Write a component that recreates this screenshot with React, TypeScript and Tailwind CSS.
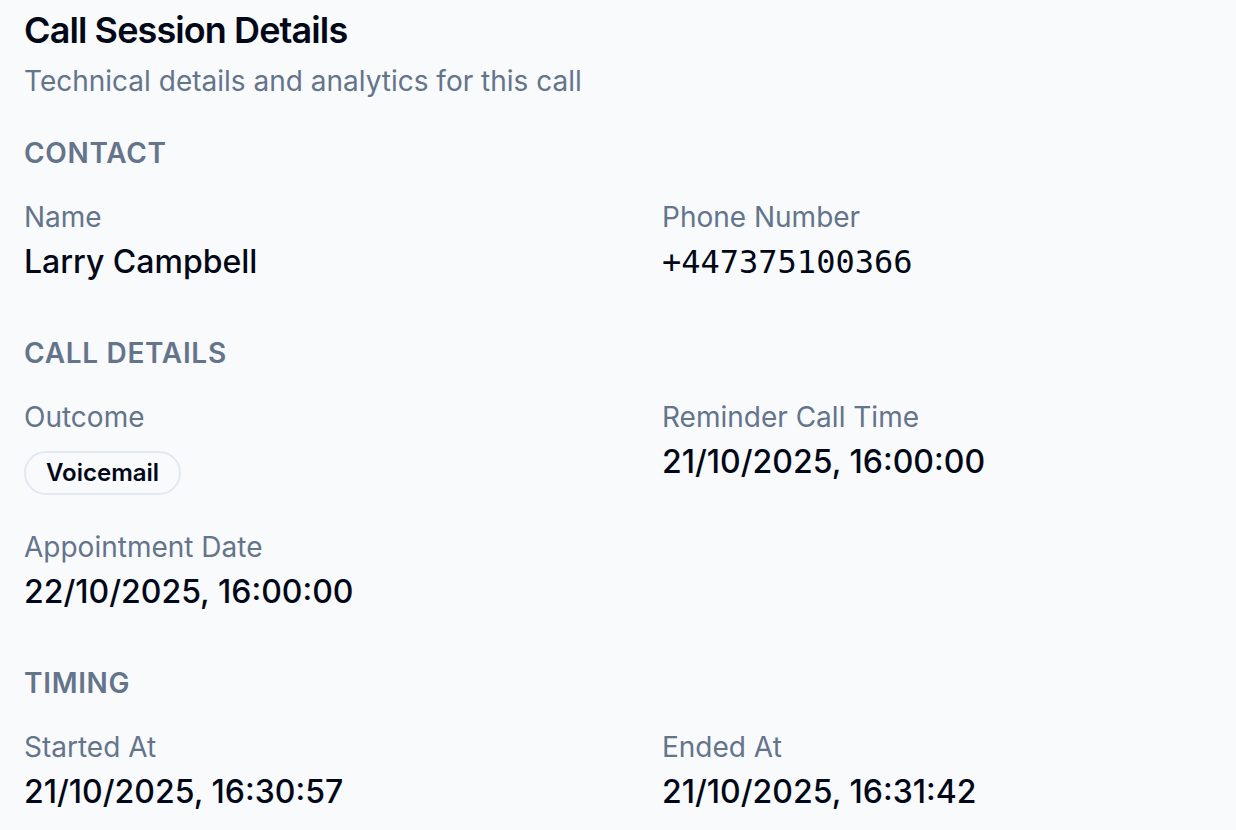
import React from "react";

const Label = ({ children }: { children: React.ReactNode }) => (
  <div className="text-[28px] leading-[40px] text-[#64748b]">{children}</div>
);

const Value = ({ children, mono }: { children: React.ReactNode; mono?: boolean }) => (
  <div
    className={
      mono
        ? "mt-[1px] text-[32px] leading-[48px] text-[#020817] [font-family:'DejaVu_Sans_Mono',monospace]"
        : "mt-[1px] text-[32px] leading-[48px] font-medium text-[#020817]"
    }
  >
    {children}
  </div>
);

const Heading = ({ children }: { children: React.ReactNode }) => (
  <div className="mb-[24px] text-[28px] leading-[40px] font-semibold uppercase tracking-[0.025em] text-[#64748b]">
    {children}
  </div>
);

export default function App() {
  return (
    <div className="min-h-[830px] w-full bg-[#f8fafc] px-[24px] pt-[12px] [font-family:Inter,'Noto_Sans',sans-serif]">
      <div className="flex flex-col gap-[13px]">
        <h1 className="text-[36px] leading-[36px] font-semibold tracking-tight text-[#020817]">
          Call Session Details
        </h1>
        <p className="text-[28px] leading-[40px] text-[#64748b]">
          Technical details and analytics for this call
        </p>
      </div>

      <div className="mt-[32px] flex flex-col gap-[47px]">
        <section>
          <Heading>Contact</Heading>
          <div className="grid grid-cols-[638px_1fr] gap-y-[32px]">
            <div>
              <Label>Name</Label>
              <Value>Larry Campbell</Value>
            </div>
            <div>
              <Label>Phone Number</Label>
              <Value mono>+447375100366</Value>
            </div>
          </div>
        </section>

        <section>
          <Heading>Call Details</Heading>
          <div className="grid grid-cols-[638px_1fr] gap-y-[32px]">
            <div>
              <Label>Outcome</Label>
              <div className="mt-[14px] flex">
                <span className="inline-flex h-[44px] items-center rounded-full border-2 border-[#e2e8f0] px-[20px] text-[24px] leading-[32px] font-semibold text-[#020817]">
                  Voicemail
                </span>
              </div>
            </div>
            <div>
              <Label>Reminder Call Time</Label>
              <Value>21/10/2025, 16:00:00</Value>
            </div>
            <div>
              <Label>Appointment Date</Label>
              <Value>22/10/2025, 16:00:00</Value>
            </div>
          </div>
        </section>

        <section>
          <Heading>Timing</Heading>
          <div className="grid grid-cols-[638px_1fr] gap-y-[32px]">
            <div>
              <Label>Started At</Label>
              <Value>21/10/2025, 16:30:57</Value>
            </div>
            <div>
              <Label>Ended At</Label>
              <Value>21/10/2025, 16:31:42</Value>
            </div>
          </div>
        </section>
      </div>
    </div>
  );
}
